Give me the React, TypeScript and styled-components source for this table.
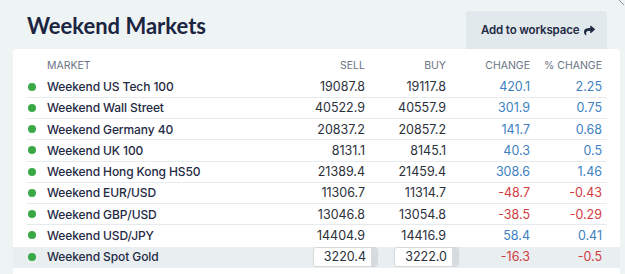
import React from 'react';
import styled, { createGlobalStyle } from 'styled-components';
import { FaShare } from 'react-icons/fa';

interface Market {
  name: string;
  sell: string;
  buy: string;
  change: string;
  pct: string;
  editable?: boolean;
}

const markets: Market[] = [
  { name: 'Weekend US Tech 100', sell: '19087.8', buy: '19117.8', change: '420.1', pct: '2.25' },
  { name: 'Weekend Wall Street', sell: '40522.9', buy: '40557.9', change: '301.9', pct: '0.75' },
  { name: 'Weekend Germany 40', sell: '20837.2', buy: '20857.2', change: '141.7', pct: '0.68' },
  { name: 'Weekend UK 100', sell: '8131.1', buy: '8145.1', change: '40.3', pct: '0.5' },
  { name: 'Weekend Hong Kong HS50', sell: '21389.4', buy: '21459.4', change: '308.6', pct: '1.46' },
  { name: 'Weekend EUR/USD', sell: '11306.7', buy: '11314.7', change: '-48.7', pct: '-0.43' },
  { name: 'Weekend GBP/USD', sell: '13046.8', buy: '13054.8', change: '-38.5', pct: '-0.29' },
  { name: 'Weekend USD/JPY', sell: '14404.9', buy: '14416.9', change: '58.4', pct: '0.41' },
  { name: 'Weekend Spot Gold', sell: '3220.4', buy: '3222.0', change: '-16.3', pct: '-0.5', editable: true },
];

const GlobalStyle = createGlobalStyle`
  html, body {
    margin: 0;
    padding: 0;
    background: #eef3f4;
  }
  body {
    font-family: Inter, "Noto Sans", sans-serif;
    overflow: hidden;
  }
`;

const Page = styled.div`
  position: relative;
  width: 625px;
  height: 274px;
  background: #eef3f4;
  overflow: hidden;
`;

const Header = styled.div`
  display: flex;
  justify-content: space-between;
  align-items: flex-start;
  padding: 11px 18px 0 27px;
  height: 38px;
`;

const Title = styled.h1`
  margin: 4px 0 0;
  font-family: Lato, Inter, sans-serif;
  font-size: 22px;
  line-height: 1;
  font-weight: 700;
  color: #1b2541;
`;

const WorkspaceButton = styled.button`
  display: flex;
  align-items: center;
  gap: 5px;
  height: 38px;
  width: 141px;
  padding: 0 0 0 15px;
  border: none;
  border-radius: 3px 3px 0 0;
  background: #e2e9ec;
  color: #1f2a44;
  font-family: Inter, "Noto Sans", sans-serif;
  font-size: 11.5px;
  font-weight: 600;
  letter-spacing: -0.15px;
  white-space: nowrap;
  cursor: pointer;

  svg {
    width: 11px;
    height: 11px;
  }
`;

const CloseMark = styled.svg`
  position: absolute;
  top: 0;
  right: 0;
`;

const Card = styled.div`
  margin: 0 5px 0 13px;
  padding-top: 6px;
  background: #ffffff;
  border-radius: 4px 4px 0 0;
  height: 230px;
`;

const Row = styled.div<{ $active?: boolean }>`
  padding: 0 13px 0 14px;
  background: ${({ $active }) => ($active ? '#e9eef1' : 'transparent')};
`;

const Grid = styled.div<{ $head?: boolean; $line?: boolean }>`
  display: grid;
  grid-template-columns: 20px 1fr 80px 81px 84px 72px;
  align-items: center;
  padding-right: 5px;
  height: ${({ $head }) => ($head ? '21.5px' : '21.25px')};
  box-sizing: border-box;
  border-bottom: 1px solid ${({ $line }) => ($line ? '#e7ebee' : 'transparent')};
  font-size: 12.5px;
  color: #2b303a;
`;

const HeadCell = styled.div<{ $right?: boolean }>`
  font-size: 10.5px;
  color: #6b7484;
  text-transform: uppercase;
  text-align: ${({ $right }) => ($right ? 'right' : 'left')};
`;

const Dot = styled.span`
  display: block;
  width: 8px;
  height: 8px;
  margin-left: 1px;
  border-radius: 50%;
  background: #3aa845;
`;

const Name = styled.div`
  font-size: 12px;
  font-weight: 500;
  letter-spacing: -0.1px;
  color: #1f2a44;
`;

const Num = styled.div<{ $tone?: 'up' | 'down' }>`
  text-align: right;
  color: ${({ $tone }) => ($tone === 'up' ? '#3d7fc1' : $tone === 'down' ? '#d13b3e' : '#2b303a')};
`;

const PriceBox = styled.div`
  display: flex;
  align-items: stretch;
  justify-content: flex-end;
  margin: 0 -13px 0 auto;
  width: 65px;
  height: 20px;
  box-sizing: border-box;
  border: 1px solid #d5d9dc;
  border-radius: 3px;
  background: #ffffff;
  overflow: hidden;
`;

const PriceText = styled.span`
  display: flex;
  align-items: center;
  padding-right: 5px;
  color: #2b303a;
`;

const Spinner = styled.span`
  width: 6px;
  background: #d7dbde;
`;

const tone = (v: string) => (v.startsWith('-') ? 'down' : 'up');

const Price: React.FC<{ value: string; editable?: boolean }> = ({ value, editable }) =>
  editable ? (
    <PriceBox>
      <PriceText>{value}</PriceText>
      <Spinner />
    </PriceBox>
  ) : (
    <Num>{value}</Num>
  );

const App: React.FC = () => (
  <Page>
    <GlobalStyle />
    <CloseMark width="8" height="8" viewBox="0 0 8 8">
      <path d="M2 0 L7 5" stroke="#8a9099" strokeWidth="1" fill="none" />
    </CloseMark>
    <Header>
      <Title>Weekend Markets</Title>
      <WorkspaceButton>
        Add to workspace
        <FaShare />
      </WorkspaceButton>
    </Header>
    <Card>
      <Row>
        <Grid $head>
          <span />
          <HeadCell>Market</HeadCell>
          <HeadCell $right>Sell</HeadCell>
          <HeadCell $right>Buy</HeadCell>
          <HeadCell $right>Change</HeadCell>
          <HeadCell $right>% Change</HeadCell>
        </Grid>
      </Row>
      {markets.map((m, i) => (
        <Row key={m.name} $active={m.editable}>
          <Grid $line={i < markets.length - 2}>
            <Dot />
            <Name>{m.name}</Name>
            <Price value={m.sell} editable={m.editable} />
            <Price value={m.buy} editable={m.editable} />
            <Num $tone={tone(m.change)}>{m.change}</Num>
            <Num $tone={tone(m.pct)}>{m.pct}</Num>
          </Grid>
        </Row>
      ))}
    </Card>
  </Page>
);

export default App;
